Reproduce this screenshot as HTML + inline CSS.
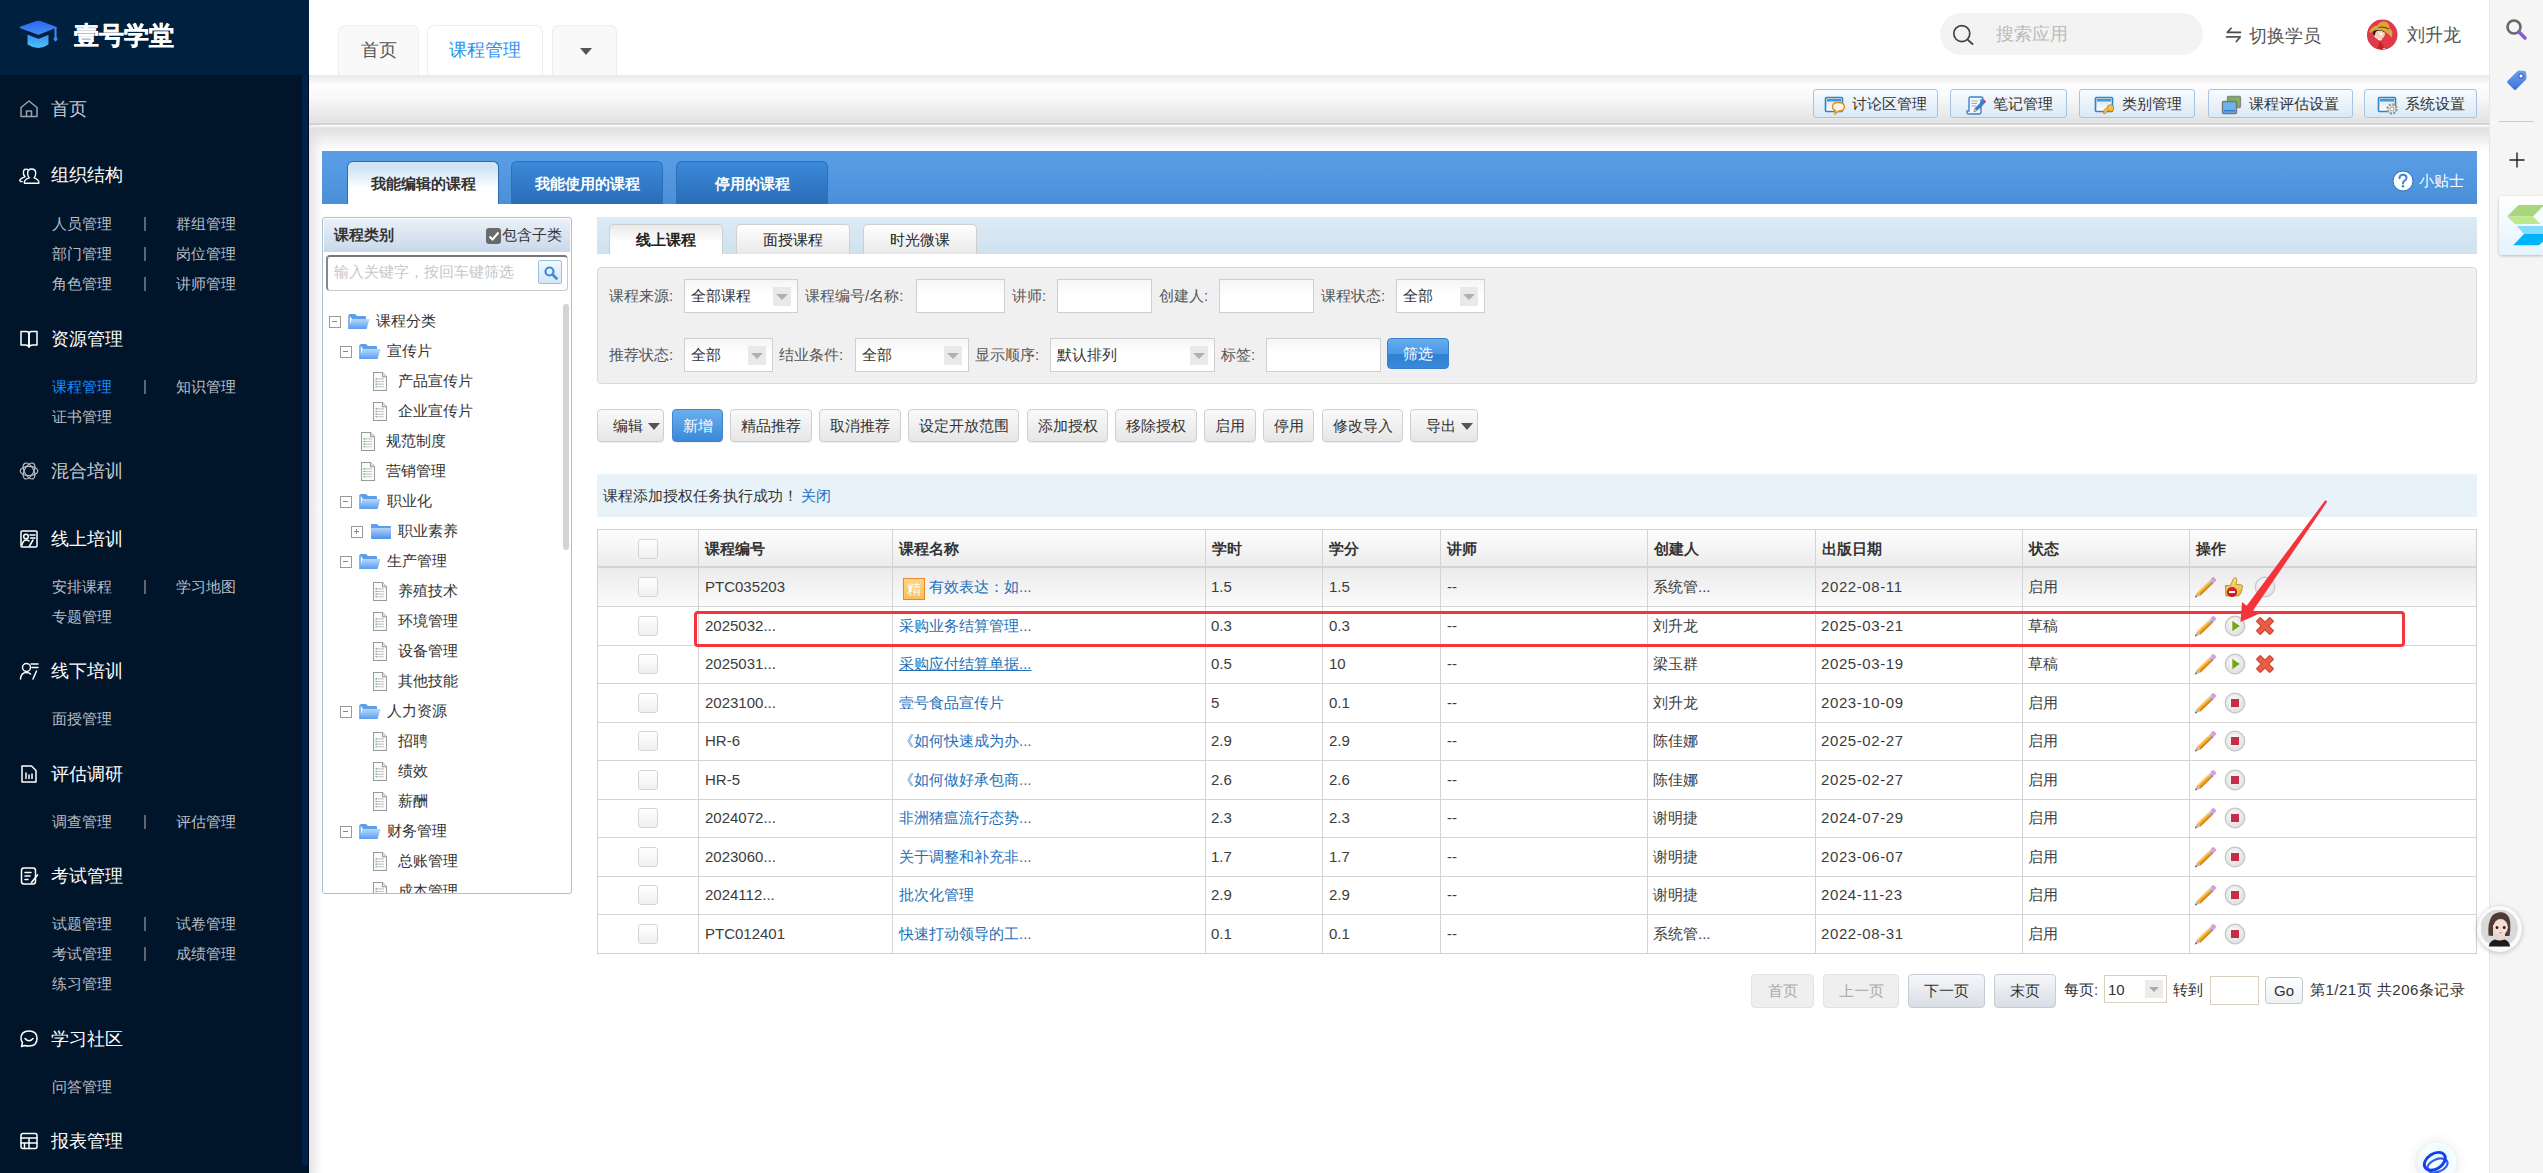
<!DOCTYPE html><html><head><meta charset="utf-8"><style>
*{margin:0;padding:0;box-sizing:border-box}
html,body{width:2543px;height:1173px;overflow:hidden;background:#fff;font-family:"Liberation Sans",sans-serif;color:#333}
.abs{position:absolute}
#side{position:absolute;left:0;top:0;width:309px;height:1173px;background:#001529}
#side .logo{position:absolute;left:0;top:0;width:309px;height:75px;background:#00203f}
#side .menu{position:absolute;left:302px;top:75px;width:7px;height:1090px;background:#00224a;border-right:1px solid #000d1f}
.mt{position:absolute;left:51px;font-size:18px;color:#fff;line-height:24px;white-space:nowrap}
.mt.g{color:#c8ccd2}
.ms{position:absolute;font-size:15px;color:#b9bdc4;line-height:20px;white-space:nowrap}
.ms.on{color:#1a8cff}
.sep{position:absolute;left:144px;width:2px;height:14px;background:#5f6670}
.mi{position:absolute;left:19px;width:20px;height:20px}

.tabh{top:25px;height:50px;border:1px solid #eee;border-bottom:none;border-radius:7px 7px 0 0;font-size:18px;line-height:48px;text-align:center}
.tbb{top:89px;height:29px;border:1px solid #a7c5e2;border-radius:3px;background:linear-gradient(#f7fbfe,#dce9f5);font-size:15px;line-height:27px;color:#333;padding-left:41px;white-space:nowrap}
.tbb .ic{position:absolute;left:11px;top:5px;width:20px;height:17px;border:2px solid #3a7cc0;background:#fff}
.btab{top:161px;height:43px;border-radius:6px 6px 0 0;font-size:15px;font-weight:bold;line-height:43px;text-align:center;color:#fff;background:linear-gradient(#3b8ad9,#2a6db8);border:1px solid #2f6fb3;border-bottom:none}
.btab.on{background:linear-gradient(#d0e4f5 15%,#fff 62%);color:#333;border-color:#2a6cb3}
.itab{top:224px;width:114px;height:30px;border:1px solid #cfcfcf;border-bottom:none;border-radius:5px 5px 0 0;background:linear-gradient(#fff,#e9e9e9);font-size:15px;line-height:30px;text-align:center;color:#222}
.itab.on{background:linear-gradient(#eaeaea,#fff 60%);font-weight:bold}
.abtn{top:409px;height:33px;box-shadow:0 1px 0 rgba(0,0,0,0.07);border:1px solid #cfcfcf;border-radius:4px;background:linear-gradient(#fafafa,#e6e6e6);font-size:15px;line-height:31px;text-align:center;color:#333;white-space:nowrap}
.abtn.blue{background:linear-gradient(#6aaeee,#3a88da);border-color:#3f86d0;color:#fff}

.th{font-size:15px;font-weight:bold;line-height:20px;color:#333;white-space:nowrap}
.td{font-size:15px;line-height:20px;color:#3c3c3c;white-space:nowrap}
.td.lk{color:#1d6fb8}
.td.u{text-decoration:underline}
.cb{width:20px;height:20px;border:1px solid #d5d5d5;border-radius:3px;background:linear-gradient(#fff,#f0f0f0)}

.fl{font-size:15px;line-height:20px;color:#555;white-space:nowrap}
.fin{height:34px;border:1px solid #cfcfcf;background:linear-gradient(#f5f5f5,#fff 45%);}
.fin .st{position:absolute;left:6px;top:6px;font-size:15px;line-height:20px;color:#333;white-space:nowrap}
.fin .sa{position:absolute;right:6px;top:7px;width:18px;height:19px;background:#e9e9e9}
.fin .sa i{position:absolute;left:3px;top:7px;border-left:6px solid transparent;border-right:6px solid transparent;border-top:6px solid #b0b0b0}
.pg{top:974px;height:34px;border:1px solid #c5ccd5;border-radius:4px;background:linear-gradient(#f5f7fa,#d9dee5);font-size:15px;line-height:32px;text-align:center;color:#333}
.pg.dis{background:#efefef;border-color:#e2e2e2;color:#aaa}
.pt{font-size:15px;line-height:20px;color:#333;white-space:nowrap}

.tt{font-size:15px;line-height:20px;color:#333;white-space:nowrap}
</style></head><body>
<div id="side"><div class="logo"></div><div class="menu"></div>
<div class="abs" style="left:74px;top:18px;font-size:25px;font-weight:bold;color:#fff;line-height:34px;-webkit-text-stroke:0.3px #fff">壹号学堂</div>
<div class="mt g" style="top:97px">首页</div>
<div class="mt" style="top:163px">组织结构</div>
<div class="ms" style="left:52px;top:214px">人员管理</div>
<div class="sep" style="top:217px"></div>
<div class="ms" style="left:176px;top:214px">群组管理</div>
<div class="ms" style="left:52px;top:244px">部门管理</div>
<div class="sep" style="top:247px"></div>
<div class="ms" style="left:176px;top:244px">岗位管理</div>
<div class="ms" style="left:52px;top:274px">角色管理</div>
<div class="sep" style="top:277px"></div>
<div class="ms" style="left:176px;top:274px">讲师管理</div>
<div class="mt" style="top:327px">资源管理</div>
<div class="ms on" style="left:52px;top:377px">课程管理</div>
<div class="sep" style="top:380px"></div>
<div class="ms" style="left:176px;top:377px">知识管理</div>
<div class="ms" style="left:52px;top:407px">证书管理</div>
<div class="mt g" style="top:459px">混合培训</div>
<div class="mt" style="top:527px">线上培训</div>
<div class="ms" style="left:52px;top:577px">安排课程</div>
<div class="sep" style="top:580px"></div>
<div class="ms" style="left:176px;top:577px">学习地图</div>
<div class="ms" style="left:52px;top:607px">专题管理</div>
<div class="mt" style="top:659px">线下培训</div>
<div class="ms" style="left:52px;top:709px">面授管理</div>
<div class="mt" style="top:762px">评估调研</div>
<div class="ms" style="left:52px;top:812px">调查管理</div>
<div class="sep" style="top:815px"></div>
<div class="ms" style="left:176px;top:812px">评估管理</div>
<div class="mt" style="top:864px">考试管理</div>
<div class="ms" style="left:52px;top:914px">试题管理</div>
<div class="sep" style="top:917px"></div>
<div class="ms" style="left:176px;top:914px">试卷管理</div>
<div class="ms" style="left:52px;top:944px">考试管理</div>
<div class="sep" style="top:947px"></div>
<div class="ms" style="left:176px;top:944px">成绩管理</div>
<div class="ms" style="left:52px;top:974px">练习管理</div>
<div class="mt" style="top:1027px">学习社区</div>
<div class="ms" style="left:52px;top:1077px">问答管理</div>
<div class="mt" style="top:1129px">报表管理</div>
<svg class="abs" style="left:18px;top:98px" width="22" height="22" viewBox="0 0 22 22" fill="none" stroke="#9ba1a9" stroke-width="1.5" stroke-linejoin="round" stroke-linecap="round"><path d="M3 9.5 L11 3 L19 9.5 V18.5 H3Z"/><path d="M8.5 18.5 V13 H13.5 V18.5"/></svg>
<svg class="abs" style="left:18px;top:164px" width="22" height="22" viewBox="0 0 22 22" fill="none" stroke="#fff" stroke-width="1.5" stroke-linejoin="round" stroke-linecap="round"><path d="M11.2 13.8 Q9.6 12 9.6 9.2 Q9.6 5 13.65 5 Q17.7 5 17.7 9.2 Q17.7 12 16.1 13.8 Q20.8 15.5 20.8 18 V19.3 H6.4 V18 Q6.4 15.5 11.2 13.8Z" stroke-width="1.4"/><path d="M9.4 5.3 Q6.2 4.3 5.4 7.8 Q5 10.8 7 12.8 Q2.4 14.2 1.8 16.2 Q1.8 17.6 4.2 17.6" stroke-width="1.4"/></svg>
<svg class="abs" style="left:18px;top:328px" width="22" height="22" viewBox="0 0 22 22" fill="none" stroke="#fff" stroke-width="1.5" stroke-linejoin="round" stroke-linecap="round"><path d="M3 3.5 H8.5 Q11 3.5 11 6 V19 Q10 17 7.5 17 H3Z"/><path d="M19 3.5 H13.5 Q11 3.5 11 6 V19 Q12 17 14.5 17 H19Z"/></svg>
<svg class="abs" style="left:18px;top:460px" width="22" height="22" viewBox="0 0 22 22" fill="none" stroke="#b8bcc3" stroke-width="1.5" stroke-linejoin="round" stroke-linecap="round"><g stroke-width="1.2"><ellipse cx="11" cy="11" rx="8.8" ry="4.6"/><ellipse cx="11" cy="11" rx="8.8" ry="4.6" transform="rotate(60 11 11)"/><ellipse cx="11" cy="11" rx="8.8" ry="4.6" transform="rotate(120 11 11)"/></g></svg>
<svg class="abs" style="left:18px;top:528px" width="22" height="22" viewBox="0 0 22 22" fill="none" stroke="#fff" stroke-width="1.5" stroke-linejoin="round" stroke-linecap="round"><rect x="3" y="3" width="16" height="16" rx="1"/><circle cx="8" cy="8.5" r="2.3"/><path d="M4 17 Q5 12 8.5 12 Q10 12 11 13"/><path d="M12 7 H17 M12.5 10 H17 M15 12 L11.5 18"/></svg>
<svg class="abs" style="left:18px;top:660px" width="22" height="22" viewBox="0 0 22 22" fill="none" stroke="#fff" stroke-width="1.5" stroke-linejoin="round" stroke-linecap="round"><circle cx="8.5" cy="7.5" r="4"/><path d="M2.5 19 Q3 12.5 8.5 12.5 Q11 12.5 12.5 14"/><path d="M13 4 H20 M14 7.5 H20 M18.5 11 L15 19"/></svg>
<svg class="abs" style="left:18px;top:763px" width="22" height="22" viewBox="0 0 22 22" fill="none" stroke="#fff" stroke-width="1.5" stroke-linejoin="round" stroke-linecap="round"><path d="M4 3 H13.5 L18 7.5 V19 H4Z"/><path d="M8 15.5 V10 M11 15.5 V12 M14 15.5 V11"/></svg>
<svg class="abs" style="left:18px;top:865px" width="22" height="22" viewBox="0 0 22 22" fill="none" stroke="#fff" stroke-width="1.5" stroke-linejoin="round" stroke-linecap="round"><rect x="3.5" y="3" width="14" height="16" rx="2.5"/><path d="M7 7.5 H13 M7 11 H12 M7 14.5 H10"/><path d="M19.5 10 L13.5 17.5" stroke-width="1.7"/></svg>
<svg class="abs" style="left:18px;top:1028px" width="22" height="22" viewBox="0 0 22 22" fill="none" stroke="#fff" stroke-width="1.5" stroke-linejoin="round" stroke-linecap="round"><path d="M3.5 18.5 L4.5 14.5 Q3 12.5 3 10.5 Q3 3 11 3 Q19 3 19 10.5 Q19 18 11 18 Q8.5 18 6.5 17.5Z"/><path d="M7 10.5 Q11 15 15 10.5"/></svg>
<svg class="abs" style="left:18px;top:1130px" width="22" height="22" viewBox="0 0 22 22" fill="none" stroke="#fff" stroke-width="1.5" stroke-linejoin="round" stroke-linecap="round"><rect x="3" y="3.5" width="16" height="15" rx="2"/><path d="M3 8 H19 M3 13 H19 M11 8 V18.5 M6.5 13 V18.5"/></svg>
<svg class="abs" style="left:19px;top:20px" width="40" height="30" viewBox="0 0 40 30"><defs><linearGradient id="cap1" x1="0" y1="0" x2="0" y2="1"><stop offset="0" stop-color="#2f66f6"/><stop offset="1" stop-color="#3f8cf5"/></linearGradient><linearGradient id="cap2" x1="0" y1="0" x2="0" y2="1"><stop offset="0" stop-color="#3a8cf0"/><stop offset="1" stop-color="#4fc3fb"/></linearGradient></defs><path d="M1.2 8.2 Q0 7.2 1.5 6.5 L17.5 1 Q19.5 0.3 21.5 1 L38.5 7.2 L20.5 14.5 Q19.5 15 18.5 14.5 Z" fill="url(#cap1)"/><path d="M8.5 14.5 L18.5 18.5 Q19.5 19 20.5 18.5 L29.5 14.7 V24.5 Q19.5 31.5 8.5 24.5Z" fill="url(#cap2)"/><path d="M35.5 8 L37.6 7.6 V17 L38.8 19.3 L36.6 21.8 L34.4 19.3 L35.5 17Z" fill="#3d86f1"/></svg>
</div>
<div class="abs" style="left:309px;top:0;width:2180px;height:75px;background:#fff"></div>
<div class="abs tabh" style="left:338px;width:81px;background:#f9f9f9;color:#555">首页</div>
<div class="abs tabh" style="left:427px;width:116px;background:#fff;color:#2b8ff0">课程管理</div>
<div class="abs tabh" style="left:552px;width:65px;background:#f9f9f9"><div class="abs" style="left:27px;top:22px;width:0;height:0;border-left:6px solid transparent;border-right:6px solid transparent;border-top:7px solid #555"></div></div>
<div class="abs" style="left:1940px;top:13px;width:263px;height:42px;border-radius:21px;background:#f3f3f3"></div>
<div class="abs" style="left:1996px;top:22px;font-size:18px;line-height:24px;color:#bbb">搜索应用</div>
<svg class="abs" style="left:2224px;top:26px" width="20" height="18" viewBox="0 0 20 18"><path d="M16.6 6.4 H3.3 L7.1 2.2" stroke="#4a4a4a" stroke-width="1.6" fill="none" stroke-linecap="round" stroke-linejoin="round"/><path d="M2.6 10.9 H16.2 L12.4 15.5" stroke="#555" stroke-width="1.8" fill="none" stroke-linecap="round" stroke-linejoin="round"/></svg>
<div class="abs" style="left:2249px;top:23.5px;font-size:18px;line-height:24px;color:#555">切换学员</div>
<div class="abs" style="left:2367px;top:20px;width:30px;height:30px;border-radius:50%;background:#d63a3a"></div>
<div class="abs" style="left:2407px;top:23px;font-size:18px;line-height:24px;color:#555">刘升龙</div>
<div class="abs" style="left:309px;top:75px;width:2180px;height:50px;background:linear-gradient(#e9e9e9 0,#fdfdfd 22%,#f9f9f9 45%,#e2e2e2 100%);border-bottom:2px solid #d2d2d2"></div>
<div class="abs tbb" style="left:1813px;width:125px;padding-left:38px">讨论区管理</div>
<div class="abs tbb" style="left:1950px;width:117px;padding-left:42px">笔记管理</div>
<div class="abs tbb" style="left:2079px;width:116px;padding-left:42px">类别管理</div>
<div class="abs tbb" style="left:2208px;width:145px;padding-left:40px">课程评估设置</div>
<div class="abs tbb" style="left:2364px;width:113px;padding-left:40px">系统设置</div>
<div class="abs" style="left:309px;top:125px;width:2180px;height:1048px;background:#fff"></div>
<div class="abs" style="left:309px;top:125px;width:14px;height:1048px;background:linear-gradient(90deg,#e6e6e6,rgba(255,255,255,0))"></div>
<div class="abs" style="left:309px;top:126px;width:2180px;height:25px;background:linear-gradient(#f4f4f4 0,#e0e0e0 8%,rgba(255,255,255,0) 100%)"></div>
<div class="abs" style="left:2489px;top:0;width:54px;height:1173px;background:#f5f5f5;border-left:1px solid #e6e6e6"></div>
<div class="abs" style="left:2476px;top:0;width:13px;height:13px;background:#fff;border-top-right-radius:7px"></div>
<div class="abs" style="left:322px;top:151px;width:2155px;height:53px;background:linear-gradient(#5a9fe6,#4a8fd9)"></div>
<div class="abs btab on" style="left:347px;width:152px">我能编辑的课程</div>
<div class="abs btab" style="left:511px;width:152px">我能使用的课程</div>
<div class="abs btab" style="left:676px;width:152px">停用的课程</div>
<div class="abs" style="left:2419px;top:171px;font-size:15px;line-height:20px;color:#fff">小贴士</div>
<div class="abs" style="left:322px;top:217px;width:250px;height:677px;border:1px solid #a9bfd6;border-radius:3px;background:#fff"></div>
<div class="abs" style="left:324px;top:219px;width:246px;height:33px;background:linear-gradient(#eaf0f8,#c8d8ea)"></div>
<div class="abs" style="left:334px;top:225px;font-size:15px;line-height:20px;color:#333;font-weight:bold">课程类别</div>
<div class="abs" style="left:502px;top:225px;font-size:15px;line-height:20px;color:#333">包含子类</div>
<div class="abs" style="left:597px;top:217px;width:1880px;height:37px;background:linear-gradient(#ddebf5,#cfe1ee)"></div>
<div class="abs itab on" style="left:609px">线上课程</div>
<div class="abs itab" style="left:736px">面授课程</div>
<div class="abs itab" style="left:863px">时光微课</div>
<div class="abs" style="left:597px;top:267px;width:1880px;height:117px;background:#f0f0f0;border:1px solid #d9d9d9;border-radius:4px"></div>
<div class="abs abtn" style="left:597px;width:67px;text-align:left;padding-left:15px">编辑<i class="abs" style="left:50px;top:13px;border-left:6px solid transparent;border-right:6px solid transparent;border-top:7px solid #555"></i></div>
<div class="abs abtn blue" style="left:672px;width:51px">新增</div>
<div class="abs abtn" style="left:730px;width:82px">精品推荐</div>
<div class="abs abtn" style="left:819px;width:82px">取消推荐</div>
<div class="abs abtn" style="left:908px;width:111px">设定开放范围</div>
<div class="abs abtn" style="left:1027px;width:81px">添加授权</div>
<div class="abs abtn" style="left:1115px;width:82px">移除授权</div>
<div class="abs abtn" style="left:1204px;width:52px">启用</div>
<div class="abs abtn" style="left:1263px;width:51px">停用</div>
<div class="abs abtn" style="left:1322px;width:81px">修改导入</div>
<div class="abs abtn" style="left:1410px;width:68px;text-align:left;padding-left:15px">导出<i class="abs" style="left:50px;top:13px;border-left:6px solid transparent;border-right:6px solid transparent;border-top:7px solid #555"></i></div>
<div class="abs" style="left:597px;top:474px;width:1880px;height:43px;background:#e8f2f9"></div>
<div class="abs" style="left:603px;top:486px;font-size:15px;line-height:20px;color:#333">课程添加授权任务执行成功！<span style="color:#1b6cc0;margin-left:3px">关闭</span></div>
<div class="abs" style="left:597px;top:529px;width:1880px;height:425px;border:1px solid #d0d0d0;background:#fff"></div>
<div class="abs" style="left:598px;top:530px;width:1878px;height:38px;background:linear-gradient(#fdfdfd,#ececec);border-bottom:2px solid #d4d4d4"></div>
<div class="abs" style="left:598px;top:568px;width:1878px;height:38px;background:linear-gradient(#ebebeb,#fbfbfb)"></div>
<div class="abs" style="left:698px;top:530px;width:1px;height:423px;background:#d4d4d4"></div>
<div class="abs" style="left:892px;top:530px;width:1px;height:423px;background:#d4d4d4"></div>
<div class="abs" style="left:1205px;top:530px;width:1px;height:423px;background:#d4d4d4"></div>
<div class="abs" style="left:1322px;top:530px;width:1px;height:423px;background:#d4d4d4"></div>
<div class="abs" style="left:1440px;top:530px;width:1px;height:423px;background:#d4d4d4"></div>
<div class="abs" style="left:1647px;top:530px;width:1px;height:423px;background:#d4d4d4"></div>
<div class="abs" style="left:1815px;top:530px;width:1px;height:423px;background:#d4d4d4"></div>
<div class="abs" style="left:2022px;top:530px;width:1px;height:423px;background:#d4d4d4"></div>
<div class="abs" style="left:2189px;top:530px;width:1px;height:423px;background:#d4d4d4"></div>
<div class="abs" style="left:598px;top:606px;width:1878px;height:1px;background:#d4d4d4"></div>
<div class="abs" style="left:598px;top:645px;width:1878px;height:1px;background:#d4d4d4"></div>
<div class="abs" style="left:598px;top:683px;width:1878px;height:1px;background:#d4d4d4"></div>
<div class="abs" style="left:598px;top:722px;width:1878px;height:1px;background:#d4d4d4"></div>
<div class="abs" style="left:598px;top:760px;width:1878px;height:1px;background:#d4d4d4"></div>
<div class="abs" style="left:598px;top:799px;width:1878px;height:1px;background:#d4d4d4"></div>
<div class="abs" style="left:598px;top:837px;width:1878px;height:1px;background:#d4d4d4"></div>
<div class="abs" style="left:598px;top:876px;width:1878px;height:1px;background:#d4d4d4"></div>
<div class="abs" style="left:598px;top:914px;width:1878px;height:1px;background:#d4d4d4"></div>
<div class="abs th" style="left:704.5px;top:538.5px">课程编号</div>
<div class="abs th" style="left:898.5px;top:538.5px">课程名称</div>
<div class="abs th" style="left:1211.5px;top:538.5px">学时</div>
<div class="abs th" style="left:1328.5px;top:538.5px">学分</div>
<div class="abs th" style="left:1446.5px;top:538.5px">讲师</div>
<div class="abs th" style="left:1653.5px;top:538.5px">创建人</div>
<div class="abs th" style="left:1821.5px;top:538.5px">出版日期</div>
<div class="abs th" style="left:2028.5px;top:538.5px">状态</div>
<div class="abs th" style="left:2195.5px;top:538.5px">操作</div>
<div class="abs cb" style="left:638px;top:538.5px"></div>
<div class="abs cb" style="left:638px;top:577.25px"></div>
<div class="abs td" style="left:705px;top:577.25px">PTC035203</div>
<div class="abs" style="left:903px;top:578.25px;width:22px;height:22px;background:linear-gradient(#fed586,#fbbf5c);border:1px solid #e6892c;color:#fff;font-size:14px;line-height:20px;text-align:center">精</div>
<div class="abs td lk" style="left:929px;top:577.25px">有效表达：如...</div>
<div class="abs td" style="left:1211px;top:577.25px">1.5</div>
<div class="abs td" style="left:1329px;top:577.25px">1.5</div>
<div class="abs td" style="left:1447px;top:577.25px">--</div>
<div class="abs td" style="left:1653px;top:577.25px">系统管...</div>
<div class="abs td" style="left:1821px;top:577.25px;letter-spacing:0.6px">2022-08-11</div>
<div class="abs td" style="left:2028px;top:577.25px">启用</div>
<svg class="abs" style="left:2193px;top:575.25px" width="24" height="24" viewBox="0 0 24 24"><defs><linearGradient id="pg" x1="0" y1="0" x2="0" y2="1"><stop offset="0" stop-color="#ffe39a"/><stop offset="0.5" stop-color="#f7a722"/><stop offset="1" stop-color="#c9700f"/></linearGradient><linearGradient id="pf" x1="0" y1="0" x2="0" y2="1"><stop offset="0" stop-color="#e0e0e0"/><stop offset="1" stop-color="#7d7d7d"/></linearGradient></defs><g transform="translate(1.9 22.4) rotate(-43.6)"><path d="M0 0 L5.5 -2.5 V2.5Z" fill="#c9b79a"/><path d="M0 0 L2 -0.9 V0.9Z" fill="#5a4a3a"/><rect x="5.5" y="-2.5" width="15" height="5" fill="url(#pg)"/><rect x="20.5" y="-2.5" width="3" height="5" fill="url(#pf)"/><rect x="23.5" y="-2.5" width="4.3" height="5" rx="1.5" fill="#e09ad8"/></g></svg>
<svg class="abs" style="left:2222px;top:575.25px" width="24" height="24" viewBox="0 0 24 24"><defs><linearGradient id="tg" x1="0" y1="0" x2="0" y2="1"><stop offset="0" stop-color="#fbe08a"/><stop offset="1" stop-color="#e2b23a"/></linearGradient></defs><path d="M3.5 10.5 L8.5 10.5 L11.5 3.5 Q12.8 2 14 3 Q15 4 14.5 6.5 L14 9.5 L19 9.8 Q21 10.3 20.5 12.3 L19.8 13.5 Q20.6 14.8 19.5 16 L18 19.5 Q17 21 15 21 L4 21Z" fill="url(#tg)" stroke="#b58a1a" stroke-width="0.9"/><circle cx="10" cy="17" r="5" fill="#c8101c"/><circle cx="10" cy="16.2" r="3.8" fill="#e0303a" opacity="0.6"/><rect x="7" y="16" width="6" height="2" rx="0.5" fill="#fff"/></svg>
<svg class="abs" style="left:2253px;top:575.25px" width="24" height="24" viewBox="0 0 24 24"><defs><radialGradient id="gc" cx="0.45" cy="0.4" r="0.7"><stop offset="0" stop-color="#fafafa"/><stop offset="1" stop-color="#dedede"/></radialGradient></defs><circle cx="12" cy="12" r="9.8" fill="url(#gc)" stroke="#c8c8c8" stroke-width="1.2"/></svg>
<div class="abs cb" style="left:638px;top:615.75px"></div>
<div class="abs td" style="left:705px;top:615.75px">2025032...</div>
<div class="abs td lk" style="left:899px;top:615.75px">采购业务结算管理...</div>
<div class="abs td" style="left:1211px;top:615.75px">0.3</div>
<div class="abs td" style="left:1329px;top:615.75px">0.3</div>
<div class="abs td" style="left:1447px;top:615.75px">--</div>
<div class="abs td" style="left:1653px;top:615.75px">刘升龙</div>
<div class="abs td" style="left:1821px;top:615.75px;letter-spacing:0.6px">2025-03-21</div>
<div class="abs td" style="left:2028px;top:615.75px">草稿</div>
<svg class="abs" style="left:2193px;top:613.75px" width="24" height="24" viewBox="0 0 24 24"><defs><linearGradient id="pg" x1="0" y1="0" x2="0" y2="1"><stop offset="0" stop-color="#ffe39a"/><stop offset="0.5" stop-color="#f7a722"/><stop offset="1" stop-color="#c9700f"/></linearGradient><linearGradient id="pf" x1="0" y1="0" x2="0" y2="1"><stop offset="0" stop-color="#e0e0e0"/><stop offset="1" stop-color="#7d7d7d"/></linearGradient></defs><g transform="translate(1.9 22.4) rotate(-43.6)"><path d="M0 0 L5.5 -2.5 V2.5Z" fill="#c9b79a"/><path d="M0 0 L2 -0.9 V0.9Z" fill="#5a4a3a"/><rect x="5.5" y="-2.5" width="15" height="5" fill="url(#pg)"/><rect x="20.5" y="-2.5" width="3" height="5" fill="url(#pf)"/><rect x="23.5" y="-2.5" width="4.3" height="5" rx="1.5" fill="#e09ad8"/></g></svg>
<svg class="abs" style="left:2223px;top:613.75px" width="24" height="24" viewBox="0 0 24 24"><defs><radialGradient id="pc" cx="0.45" cy="0.4" r="0.7"><stop offset="0" stop-color="#fcfcfc"/><stop offset="1" stop-color="#d9d9d9"/></radialGradient></defs><circle cx="12" cy="12" r="9.8" fill="url(#pc)" stroke="#c4c4c4" stroke-width="1.2"/><path d="M9.3 6.8 L16.8 12 L9.3 17.2Z" fill="#76a615"/></svg>
<svg class="abs" style="left:2253px;top:613.75px" width="24" height="24" viewBox="0 0 24 24"><g transform="rotate(45 12 12)"><rect x="2" y="8.7" width="20" height="6.6" rx="1.2" fill="#c8402e"/><rect x="8.7" y="2" width="6.6" height="20" rx="1.2" fill="#c8402e"/><rect x="3" y="9.7" width="18" height="4.6" rx="0.8" fill="#e95c46"/><rect x="9.7" y="3" width="4.6" height="18" rx="0.8" fill="#e95c46"/></g></svg>
<div class="abs cb" style="left:638px;top:654.25px"></div>
<div class="abs td" style="left:705px;top:654.25px">2025031...</div>
<div class="abs td lk u" style="left:899px;top:654.25px">采购应付结算单据...</div>
<div class="abs td" style="left:1211px;top:654.25px">0.5</div>
<div class="abs td" style="left:1329px;top:654.25px">10</div>
<div class="abs td" style="left:1447px;top:654.25px">--</div>
<div class="abs td" style="left:1653px;top:654.25px">梁玉群</div>
<div class="abs td" style="left:1821px;top:654.25px;letter-spacing:0.6px">2025-03-19</div>
<div class="abs td" style="left:2028px;top:654.25px">草稿</div>
<svg class="abs" style="left:2193px;top:652.25px" width="24" height="24" viewBox="0 0 24 24"><defs><linearGradient id="pg" x1="0" y1="0" x2="0" y2="1"><stop offset="0" stop-color="#ffe39a"/><stop offset="0.5" stop-color="#f7a722"/><stop offset="1" stop-color="#c9700f"/></linearGradient><linearGradient id="pf" x1="0" y1="0" x2="0" y2="1"><stop offset="0" stop-color="#e0e0e0"/><stop offset="1" stop-color="#7d7d7d"/></linearGradient></defs><g transform="translate(1.9 22.4) rotate(-43.6)"><path d="M0 0 L5.5 -2.5 V2.5Z" fill="#c9b79a"/><path d="M0 0 L2 -0.9 V0.9Z" fill="#5a4a3a"/><rect x="5.5" y="-2.5" width="15" height="5" fill="url(#pg)"/><rect x="20.5" y="-2.5" width="3" height="5" fill="url(#pf)"/><rect x="23.5" y="-2.5" width="4.3" height="5" rx="1.5" fill="#e09ad8"/></g></svg>
<svg class="abs" style="left:2223px;top:652.25px" width="24" height="24" viewBox="0 0 24 24"><defs><radialGradient id="pc" cx="0.45" cy="0.4" r="0.7"><stop offset="0" stop-color="#fcfcfc"/><stop offset="1" stop-color="#d9d9d9"/></radialGradient></defs><circle cx="12" cy="12" r="9.8" fill="url(#pc)" stroke="#c4c4c4" stroke-width="1.2"/><path d="M9.3 6.8 L16.8 12 L9.3 17.2Z" fill="#76a615"/></svg>
<svg class="abs" style="left:2253px;top:652.25px" width="24" height="24" viewBox="0 0 24 24"><g transform="rotate(45 12 12)"><rect x="2" y="8.7" width="20" height="6.6" rx="1.2" fill="#c8402e"/><rect x="8.7" y="2" width="6.6" height="20" rx="1.2" fill="#c8402e"/><rect x="3" y="9.7" width="18" height="4.6" rx="0.8" fill="#e95c46"/><rect x="9.7" y="3" width="4.6" height="18" rx="0.8" fill="#e95c46"/></g></svg>
<div class="abs cb" style="left:638px;top:692.75px"></div>
<div class="abs td" style="left:705px;top:692.75px">2023100...</div>
<div class="abs td lk" style="left:899px;top:692.75px">壹号食品宣传片</div>
<div class="abs td" style="left:1211px;top:692.75px">5</div>
<div class="abs td" style="left:1329px;top:692.75px">0.1</div>
<div class="abs td" style="left:1447px;top:692.75px">--</div>
<div class="abs td" style="left:1653px;top:692.75px">刘升龙</div>
<div class="abs td" style="left:1821px;top:692.75px;letter-spacing:0.6px">2023-10-09</div>
<div class="abs td" style="left:2028px;top:692.75px">启用</div>
<svg class="abs" style="left:2193px;top:690.75px" width="24" height="24" viewBox="0 0 24 24"><defs><linearGradient id="pg" x1="0" y1="0" x2="0" y2="1"><stop offset="0" stop-color="#ffe39a"/><stop offset="0.5" stop-color="#f7a722"/><stop offset="1" stop-color="#c9700f"/></linearGradient><linearGradient id="pf" x1="0" y1="0" x2="0" y2="1"><stop offset="0" stop-color="#e0e0e0"/><stop offset="1" stop-color="#7d7d7d"/></linearGradient></defs><g transform="translate(1.9 22.4) rotate(-43.6)"><path d="M0 0 L5.5 -2.5 V2.5Z" fill="#c9b79a"/><path d="M0 0 L2 -0.9 V0.9Z" fill="#5a4a3a"/><rect x="5.5" y="-2.5" width="15" height="5" fill="url(#pg)"/><rect x="20.5" y="-2.5" width="3" height="5" fill="url(#pf)"/><rect x="23.5" y="-2.5" width="4.3" height="5" rx="1.5" fill="#e09ad8"/></g></svg>
<svg class="abs" style="left:2223px;top:690.75px" width="24" height="24" viewBox="0 0 24 24"><defs><radialGradient id="sc" cx="0.45" cy="0.4" r="0.7"><stop offset="0" stop-color="#fcfcfc"/><stop offset="1" stop-color="#dadada"/></radialGradient></defs><circle cx="12" cy="12" r="9.8" fill="url(#sc)" stroke="#c4c4c4" stroke-width="1.2"/><rect x="8" y="8" width="8" height="8" fill="#c22d48"/></svg>
<div class="abs cb" style="left:638px;top:731.25px"></div>
<div class="abs td" style="left:705px;top:731.25px">HR-6</div>
<div class="abs td lk" style="left:899px;top:731.25px">《如何快速成为办...</div>
<div class="abs td" style="left:1211px;top:731.25px">2.9</div>
<div class="abs td" style="left:1329px;top:731.25px">2.9</div>
<div class="abs td" style="left:1447px;top:731.25px">--</div>
<div class="abs td" style="left:1653px;top:731.25px">陈佳娜</div>
<div class="abs td" style="left:1821px;top:731.25px;letter-spacing:0.6px">2025-02-27</div>
<div class="abs td" style="left:2028px;top:731.25px">启用</div>
<svg class="abs" style="left:2193px;top:729.25px" width="24" height="24" viewBox="0 0 24 24"><defs><linearGradient id="pg" x1="0" y1="0" x2="0" y2="1"><stop offset="0" stop-color="#ffe39a"/><stop offset="0.5" stop-color="#f7a722"/><stop offset="1" stop-color="#c9700f"/></linearGradient><linearGradient id="pf" x1="0" y1="0" x2="0" y2="1"><stop offset="0" stop-color="#e0e0e0"/><stop offset="1" stop-color="#7d7d7d"/></linearGradient></defs><g transform="translate(1.9 22.4) rotate(-43.6)"><path d="M0 0 L5.5 -2.5 V2.5Z" fill="#c9b79a"/><path d="M0 0 L2 -0.9 V0.9Z" fill="#5a4a3a"/><rect x="5.5" y="-2.5" width="15" height="5" fill="url(#pg)"/><rect x="20.5" y="-2.5" width="3" height="5" fill="url(#pf)"/><rect x="23.5" y="-2.5" width="4.3" height="5" rx="1.5" fill="#e09ad8"/></g></svg>
<svg class="abs" style="left:2223px;top:729.25px" width="24" height="24" viewBox="0 0 24 24"><defs><radialGradient id="sc" cx="0.45" cy="0.4" r="0.7"><stop offset="0" stop-color="#fcfcfc"/><stop offset="1" stop-color="#dadada"/></radialGradient></defs><circle cx="12" cy="12" r="9.8" fill="url(#sc)" stroke="#c4c4c4" stroke-width="1.2"/><rect x="8" y="8" width="8" height="8" fill="#c22d48"/></svg>
<div class="abs cb" style="left:638px;top:769.75px"></div>
<div class="abs td" style="left:705px;top:769.75px">HR-5</div>
<div class="abs td lk" style="left:899px;top:769.75px">《如何做好承包商...</div>
<div class="abs td" style="left:1211px;top:769.75px">2.6</div>
<div class="abs td" style="left:1329px;top:769.75px">2.6</div>
<div class="abs td" style="left:1447px;top:769.75px">--</div>
<div class="abs td" style="left:1653px;top:769.75px">陈佳娜</div>
<div class="abs td" style="left:1821px;top:769.75px;letter-spacing:0.6px">2025-02-27</div>
<div class="abs td" style="left:2028px;top:769.75px">启用</div>
<svg class="abs" style="left:2193px;top:767.75px" width="24" height="24" viewBox="0 0 24 24"><defs><linearGradient id="pg" x1="0" y1="0" x2="0" y2="1"><stop offset="0" stop-color="#ffe39a"/><stop offset="0.5" stop-color="#f7a722"/><stop offset="1" stop-color="#c9700f"/></linearGradient><linearGradient id="pf" x1="0" y1="0" x2="0" y2="1"><stop offset="0" stop-color="#e0e0e0"/><stop offset="1" stop-color="#7d7d7d"/></linearGradient></defs><g transform="translate(1.9 22.4) rotate(-43.6)"><path d="M0 0 L5.5 -2.5 V2.5Z" fill="#c9b79a"/><path d="M0 0 L2 -0.9 V0.9Z" fill="#5a4a3a"/><rect x="5.5" y="-2.5" width="15" height="5" fill="url(#pg)"/><rect x="20.5" y="-2.5" width="3" height="5" fill="url(#pf)"/><rect x="23.5" y="-2.5" width="4.3" height="5" rx="1.5" fill="#e09ad8"/></g></svg>
<svg class="abs" style="left:2223px;top:767.75px" width="24" height="24" viewBox="0 0 24 24"><defs><radialGradient id="sc" cx="0.45" cy="0.4" r="0.7"><stop offset="0" stop-color="#fcfcfc"/><stop offset="1" stop-color="#dadada"/></radialGradient></defs><circle cx="12" cy="12" r="9.8" fill="url(#sc)" stroke="#c4c4c4" stroke-width="1.2"/><rect x="8" y="8" width="8" height="8" fill="#c22d48"/></svg>
<div class="abs cb" style="left:638px;top:808.25px"></div>
<div class="abs td" style="left:705px;top:808.25px">2024072...</div>
<div class="abs td lk" style="left:899px;top:808.25px">非洲猪瘟流行态势...</div>
<div class="abs td" style="left:1211px;top:808.25px">2.3</div>
<div class="abs td" style="left:1329px;top:808.25px">2.3</div>
<div class="abs td" style="left:1447px;top:808.25px">--</div>
<div class="abs td" style="left:1653px;top:808.25px">谢明捷</div>
<div class="abs td" style="left:1821px;top:808.25px;letter-spacing:0.6px">2024-07-29</div>
<div class="abs td" style="left:2028px;top:808.25px">启用</div>
<svg class="abs" style="left:2193px;top:806.25px" width="24" height="24" viewBox="0 0 24 24"><defs><linearGradient id="pg" x1="0" y1="0" x2="0" y2="1"><stop offset="0" stop-color="#ffe39a"/><stop offset="0.5" stop-color="#f7a722"/><stop offset="1" stop-color="#c9700f"/></linearGradient><linearGradient id="pf" x1="0" y1="0" x2="0" y2="1"><stop offset="0" stop-color="#e0e0e0"/><stop offset="1" stop-color="#7d7d7d"/></linearGradient></defs><g transform="translate(1.9 22.4) rotate(-43.6)"><path d="M0 0 L5.5 -2.5 V2.5Z" fill="#c9b79a"/><path d="M0 0 L2 -0.9 V0.9Z" fill="#5a4a3a"/><rect x="5.5" y="-2.5" width="15" height="5" fill="url(#pg)"/><rect x="20.5" y="-2.5" width="3" height="5" fill="url(#pf)"/><rect x="23.5" y="-2.5" width="4.3" height="5" rx="1.5" fill="#e09ad8"/></g></svg>
<svg class="abs" style="left:2223px;top:806.25px" width="24" height="24" viewBox="0 0 24 24"><defs><radialGradient id="sc" cx="0.45" cy="0.4" r="0.7"><stop offset="0" stop-color="#fcfcfc"/><stop offset="1" stop-color="#dadada"/></radialGradient></defs><circle cx="12" cy="12" r="9.8" fill="url(#sc)" stroke="#c4c4c4" stroke-width="1.2"/><rect x="8" y="8" width="8" height="8" fill="#c22d48"/></svg>
<div class="abs cb" style="left:638px;top:846.75px"></div>
<div class="abs td" style="left:705px;top:846.75px">2023060...</div>
<div class="abs td lk" style="left:899px;top:846.75px">关于调整和补充非...</div>
<div class="abs td" style="left:1211px;top:846.75px">1.7</div>
<div class="abs td" style="left:1329px;top:846.75px">1.7</div>
<div class="abs td" style="left:1447px;top:846.75px">--</div>
<div class="abs td" style="left:1653px;top:846.75px">谢明捷</div>
<div class="abs td" style="left:1821px;top:846.75px;letter-spacing:0.6px">2023-06-07</div>
<div class="abs td" style="left:2028px;top:846.75px">启用</div>
<svg class="abs" style="left:2193px;top:844.75px" width="24" height="24" viewBox="0 0 24 24"><defs><linearGradient id="pg" x1="0" y1="0" x2="0" y2="1"><stop offset="0" stop-color="#ffe39a"/><stop offset="0.5" stop-color="#f7a722"/><stop offset="1" stop-color="#c9700f"/></linearGradient><linearGradient id="pf" x1="0" y1="0" x2="0" y2="1"><stop offset="0" stop-color="#e0e0e0"/><stop offset="1" stop-color="#7d7d7d"/></linearGradient></defs><g transform="translate(1.9 22.4) rotate(-43.6)"><path d="M0 0 L5.5 -2.5 V2.5Z" fill="#c9b79a"/><path d="M0 0 L2 -0.9 V0.9Z" fill="#5a4a3a"/><rect x="5.5" y="-2.5" width="15" height="5" fill="url(#pg)"/><rect x="20.5" y="-2.5" width="3" height="5" fill="url(#pf)"/><rect x="23.5" y="-2.5" width="4.3" height="5" rx="1.5" fill="#e09ad8"/></g></svg>
<svg class="abs" style="left:2223px;top:844.75px" width="24" height="24" viewBox="0 0 24 24"><defs><radialGradient id="sc" cx="0.45" cy="0.4" r="0.7"><stop offset="0" stop-color="#fcfcfc"/><stop offset="1" stop-color="#dadada"/></radialGradient></defs><circle cx="12" cy="12" r="9.8" fill="url(#sc)" stroke="#c4c4c4" stroke-width="1.2"/><rect x="8" y="8" width="8" height="8" fill="#c22d48"/></svg>
<div class="abs cb" style="left:638px;top:885.25px"></div>
<div class="abs td" style="left:705px;top:885.25px">2024112...</div>
<div class="abs td lk" style="left:899px;top:885.25px">批次化管理</div>
<div class="abs td" style="left:1211px;top:885.25px">2.9</div>
<div class="abs td" style="left:1329px;top:885.25px">2.9</div>
<div class="abs td" style="left:1447px;top:885.25px">--</div>
<div class="abs td" style="left:1653px;top:885.25px">谢明捷</div>
<div class="abs td" style="left:1821px;top:885.25px;letter-spacing:0.6px">2024-11-23</div>
<div class="abs td" style="left:2028px;top:885.25px">启用</div>
<svg class="abs" style="left:2193px;top:883.25px" width="24" height="24" viewBox="0 0 24 24"><defs><linearGradient id="pg" x1="0" y1="0" x2="0" y2="1"><stop offset="0" stop-color="#ffe39a"/><stop offset="0.5" stop-color="#f7a722"/><stop offset="1" stop-color="#c9700f"/></linearGradient><linearGradient id="pf" x1="0" y1="0" x2="0" y2="1"><stop offset="0" stop-color="#e0e0e0"/><stop offset="1" stop-color="#7d7d7d"/></linearGradient></defs><g transform="translate(1.9 22.4) rotate(-43.6)"><path d="M0 0 L5.5 -2.5 V2.5Z" fill="#c9b79a"/><path d="M0 0 L2 -0.9 V0.9Z" fill="#5a4a3a"/><rect x="5.5" y="-2.5" width="15" height="5" fill="url(#pg)"/><rect x="20.5" y="-2.5" width="3" height="5" fill="url(#pf)"/><rect x="23.5" y="-2.5" width="4.3" height="5" rx="1.5" fill="#e09ad8"/></g></svg>
<svg class="abs" style="left:2223px;top:883.25px" width="24" height="24" viewBox="0 0 24 24"><defs><radialGradient id="sc" cx="0.45" cy="0.4" r="0.7"><stop offset="0" stop-color="#fcfcfc"/><stop offset="1" stop-color="#dadada"/></radialGradient></defs><circle cx="12" cy="12" r="9.8" fill="url(#sc)" stroke="#c4c4c4" stroke-width="1.2"/><rect x="8" y="8" width="8" height="8" fill="#c22d48"/></svg>
<div class="abs cb" style="left:638px;top:923.75px"></div>
<div class="abs td" style="left:705px;top:923.75px">PTC012401</div>
<div class="abs td lk" style="left:899px;top:923.75px">快速打动领导的工...</div>
<div class="abs td" style="left:1211px;top:923.75px">0.1</div>
<div class="abs td" style="left:1329px;top:923.75px">0.1</div>
<div class="abs td" style="left:1447px;top:923.75px">--</div>
<div class="abs td" style="left:1653px;top:923.75px">系统管...</div>
<div class="abs td" style="left:1821px;top:923.75px;letter-spacing:0.6px">2022-08-31</div>
<div class="abs td" style="left:2028px;top:923.75px">启用</div>
<svg class="abs" style="left:2193px;top:921.75px" width="24" height="24" viewBox="0 0 24 24"><defs><linearGradient id="pg" x1="0" y1="0" x2="0" y2="1"><stop offset="0" stop-color="#ffe39a"/><stop offset="0.5" stop-color="#f7a722"/><stop offset="1" stop-color="#c9700f"/></linearGradient><linearGradient id="pf" x1="0" y1="0" x2="0" y2="1"><stop offset="0" stop-color="#e0e0e0"/><stop offset="1" stop-color="#7d7d7d"/></linearGradient></defs><g transform="translate(1.9 22.4) rotate(-43.6)"><path d="M0 0 L5.5 -2.5 V2.5Z" fill="#c9b79a"/><path d="M0 0 L2 -0.9 V0.9Z" fill="#5a4a3a"/><rect x="5.5" y="-2.5" width="15" height="5" fill="url(#pg)"/><rect x="20.5" y="-2.5" width="3" height="5" fill="url(#pf)"/><rect x="23.5" y="-2.5" width="4.3" height="5" rx="1.5" fill="#e09ad8"/></g></svg>
<svg class="abs" style="left:2223px;top:921.75px" width="24" height="24" viewBox="0 0 24 24"><defs><radialGradient id="sc" cx="0.45" cy="0.4" r="0.7"><stop offset="0" stop-color="#fcfcfc"/><stop offset="1" stop-color="#dadada"/></radialGradient></defs><circle cx="12" cy="12" r="9.8" fill="url(#sc)" stroke="#c4c4c4" stroke-width="1.2"/><rect x="8" y="8" width="8" height="8" fill="#c22d48"/></svg>
<div class="abs" style="left:694px;top:610.5px;width:1711px;height:36.5px;border:3px solid #f5333a;border-radius:4px"></div>
<svg class="abs" style="left:2230px;top:495px" width="110" height="135" viewBox="2230 495 110 135"><path d="M2325.3 500.2 L2246.7 605.7 L2242 602 L2240.5 622 L2258.5 614 L2253.3 610.3 L2327.3 501.6 Z" fill="#f5333a"/></svg>
<div class="abs fl" style="left:609px;top:286px">课程来源:</div>
<div class="abs fin" style="left:684px;top:279px;width:114px"><span class="st">全部课程</span><span class="sa"><i></i></span></div>
<div class="abs fl" style="left:805px;top:286px">课程编号/名称:</div>
<div class="abs fin" style="left:916px;top:279px;width:89px"></div>
<div class="abs fl" style="left:1012px;top:286px">讲师:</div>
<div class="abs fin" style="left:1057px;top:279px;width:95px"></div>
<div class="abs fl" style="left:1159px;top:286px">创建人:</div>
<div class="abs fin" style="left:1219px;top:279px;width:95px"></div>
<div class="abs fl" style="left:1321px;top:286px">课程状态:</div>
<div class="abs fin" style="left:1396px;top:279px;width:89px"><span class="st">全部</span><span class="sa"><i></i></span></div>
<div class="abs fl" style="left:609px;top:345px">推荐状态:</div>
<div class="abs fin" style="left:684px;top:338px;width:89px"><span class="st">全部</span><span class="sa"><i></i></span></div>
<div class="abs fl" style="left:779px;top:345px">结业条件:</div>
<div class="abs fin" style="left:855px;top:338px;width:114px"><span class="st">全部</span><span class="sa"><i></i></span></div>
<div class="abs fl" style="left:975px;top:345px">显示顺序:</div>
<div class="abs fin" style="left:1050px;top:338px;width:165px"><span class="st">默认排列</span><span class="sa"><i></i></span></div>
<div class="abs fl" style="left:1221px;top:345px">标签:</div>
<div class="abs fin" style="left:1266px;top:338px;width:115px"></div>
<div class="abs" style="left:1387px;top:338px;width:62px;height:31px;border-radius:4px;background:linear-gradient(#64aef0 0%,#4d98e4 50%,#2f80d2 52%,#3a89da);border:1px solid #3a7fc9;color:#fff;font-size:15px;line-height:29px;text-align:center">筛选</div>
<div class="abs pg dis" style="left:1751px;width:63px">首页</div>
<div class="abs pg dis" style="left:1823px;width:76px">上一页</div>
<div class="abs pg" style="left:1908px;width:77px">下一页</div>
<div class="abs pg" style="left:1994px;width:62px">末页</div>
<div class="abs pt" style="left:2064px;top:980px">每页:</div>
<div class="abs" style="left:2104px;top:975px;width:63px;height:28px;border:1px solid #d8cfc0;background:#fff"><span class="abs pt" style="left:3px;top:4px">10</span><span class="abs" style="left:40px;top:4px;width:18px;height:18px;background:#ececec"><i class="abs" style="left:4px;top:7px;border-left:5px solid transparent;border-right:5px solid transparent;border-top:5px solid #aaa"></i></span></div>
<div class="abs pt" style="left:2173px;top:980px">转到</div>
<div class="abs" style="left:2210px;top:976px;width:49px;height:29px;border:1px solid #d8cfc0;background:#fff"></div>
<div class="abs" style="left:2265px;top:977px;width:38px;height:27px;border:1px solid #c3cad3;border-radius:4px;background:linear-gradient(#fff,#eef0f3);font-size:15px;line-height:25px;text-align:center;color:#333">Go</div>
<div class="abs pt" style="left:2310px;top:980px;letter-spacing:0.5px">第1/21页 共206条记录</div>
<div class="abs" style="left:486px;top:228px;width:15px;height:16px;border-radius:3px;background:#6a6a6a"><svg class="abs" style="left:1.5px;top:2px" width="12" height="12" viewBox="0 0 12 12"><path d="M1.5 6.5 L4.5 9.5 L10.5 2.5" stroke="#fff" stroke-width="2" fill="none"/></svg></div>
<div class="abs" style="left:326px;top:255px;width:242px;height:36px;border:1px solid #c8c8c8;border-top:2px solid #777;border-left:2px solid #888;border-radius:4px;background:#fff"></div>
<div class="abs" style="left:334px;top:262px;font-size:15px;line-height:20px;color:#c6c6c6;white-space:nowrap">输入关键字，按回车键筛选</div>
<div class="abs" style="left:538px;top:260px;width:24px;height:24px;border:1px solid #9dbfe0;border-radius:2px;background:linear-gradient(#f2f8fd,#d4e6f6)"><svg class="abs" style="left:4px;top:4px" width="16" height="16" viewBox="0 0 16 16"><circle cx="6.5" cy="6.5" r="4" stroke="#3c8ae0" stroke-width="2.2" fill="none"/><path d="M9.5 9.5 L13.5 13.5" stroke="#3c8ae0" stroke-width="2.6" stroke-linecap="round"/></svg></div>
<div class="abs" style="left:563px;top:304px;width:6px;height:246px;border-radius:3px;background:#d4d4d4"></div>
<div class="abs" style="left:323px;top:300px;width:238px;height:593px;overflow:hidden">
<svg class="abs" style="left:6px;top:16px" width="12" height="12" viewBox="0 0 12 12"><rect x="0.5" y="0.5" width="11" height="11" fill="#fff" stroke="#9a9a9a"/><path d="M3 5.5 H8" stroke="#888"/></svg>
<div class="abs" style="left:25px;top:13px"><svg width="22" height="17" viewBox="0 0 22 17"><defs><linearGradient id="fo" x1="0" y1="0" x2="0" y2="1"><stop offset="0" stop-color="#b9d8fb"/><stop offset="1" stop-color="#5a9cf0"/></linearGradient></defs><path d="M1 2 Q1 1 2 1 H7 L9 3 H17 Q18 3 18 4 V6 H4 Z" fill="#5c9ee8"/><path d="M0.5 16 L3.5 6 H21.5 L18.5 16Z" fill="url(#fo)"/><path d="M1 2 V16" stroke="#5c9ee8" stroke-width="1.5"/></svg></div>
<div class="abs tt" style="left:53px;top:10.5px">课程分类</div>
<svg class="abs" style="left:17px;top:46px" width="12" height="12" viewBox="0 0 12 12"><rect x="0.5" y="0.5" width="11" height="11" fill="#fff" stroke="#9a9a9a"/><path d="M3 5.5 H8" stroke="#888"/></svg>
<div class="abs" style="left:36px;top:43px"><svg width="22" height="17" viewBox="0 0 22 17"><defs><linearGradient id="fo" x1="0" y1="0" x2="0" y2="1"><stop offset="0" stop-color="#b9d8fb"/><stop offset="1" stop-color="#5a9cf0"/></linearGradient></defs><path d="M1 2 Q1 1 2 1 H7 L9 3 H17 Q18 3 18 4 V6 H4 Z" fill="#5c9ee8"/><path d="M0.5 16 L3.5 6 H21.5 L18.5 16Z" fill="url(#fo)"/><path d="M1 2 V16" stroke="#5c9ee8" stroke-width="1.5"/></svg></div>
<div class="abs tt" style="left:64px;top:40.5px">宣传片</div>
<div class="abs" style="left:49px;top:71px"><svg width="16" height="21" viewBox="0 0 16 20" preserveAspectRatio="none"><path d="M1.5 1.5 H10.5 L14.5 5.5 V18.5 H1.5Z" fill="#fafafa" stroke="#9a9a9a"/><path d="M10.5 1.5 V5.5 H14.5" fill="#e5e5e5" stroke="#9a9a9a"/><path d="M4 7.5 H12 M4 10 H12 M4 12.5 H12 M4 15 H12" stroke="#c9c9c9"/><path d="M3.5 7.5 H4.8 M3.5 10 H4.8 M3.5 12.5 H4.8 M3.5 15 H4.8" stroke="#4caf50"/></svg></div>
<div class="abs tt" style="left:75px;top:70.5px">产品宣传片</div>
<div class="abs" style="left:49px;top:101px"><svg width="16" height="21" viewBox="0 0 16 20" preserveAspectRatio="none"><path d="M1.5 1.5 H10.5 L14.5 5.5 V18.5 H1.5Z" fill="#fafafa" stroke="#9a9a9a"/><path d="M10.5 1.5 V5.5 H14.5" fill="#e5e5e5" stroke="#9a9a9a"/><path d="M4 7.5 H12 M4 10 H12 M4 12.5 H12 M4 15 H12" stroke="#c9c9c9"/><path d="M3.5 7.5 H4.8 M3.5 10 H4.8 M3.5 12.5 H4.8 M3.5 15 H4.8" stroke="#4caf50"/></svg></div>
<div class="abs tt" style="left:75px;top:100.5px">企业宣传片</div>
<div class="abs" style="left:37px;top:131px"><svg width="16" height="21" viewBox="0 0 16 20" preserveAspectRatio="none"><path d="M1.5 1.5 H10.5 L14.5 5.5 V18.5 H1.5Z" fill="#fafafa" stroke="#9a9a9a"/><path d="M10.5 1.5 V5.5 H14.5" fill="#e5e5e5" stroke="#9a9a9a"/><path d="M4 7.5 H12 M4 10 H12 M4 12.5 H12 M4 15 H12" stroke="#c9c9c9"/><path d="M3.5 7.5 H4.8 M3.5 10 H4.8 M3.5 12.5 H4.8 M3.5 15 H4.8" stroke="#4caf50"/></svg></div>
<div class="abs tt" style="left:63px;top:130.5px">规范制度</div>
<div class="abs" style="left:37px;top:161px"><svg width="16" height="21" viewBox="0 0 16 20" preserveAspectRatio="none"><path d="M1.5 1.5 H10.5 L14.5 5.5 V18.5 H1.5Z" fill="#fafafa" stroke="#9a9a9a"/><path d="M10.5 1.5 V5.5 H14.5" fill="#e5e5e5" stroke="#9a9a9a"/><path d="M4 7.5 H12 M4 10 H12 M4 12.5 H12 M4 15 H12" stroke="#c9c9c9"/><path d="M3.5 7.5 H4.8 M3.5 10 H4.8 M3.5 12.5 H4.8 M3.5 15 H4.8" stroke="#4caf50"/></svg></div>
<div class="abs tt" style="left:63px;top:160.5px">营销管理</div>
<svg class="abs" style="left:17px;top:196px" width="12" height="12" viewBox="0 0 12 12"><rect x="0.5" y="0.5" width="11" height="11" fill="#fff" stroke="#9a9a9a"/><path d="M3 5.5 H8" stroke="#888"/></svg>
<div class="abs" style="left:36px;top:193px"><svg width="22" height="17" viewBox="0 0 22 17"><defs><linearGradient id="fo" x1="0" y1="0" x2="0" y2="1"><stop offset="0" stop-color="#b9d8fb"/><stop offset="1" stop-color="#5a9cf0"/></linearGradient></defs><path d="M1 2 Q1 1 2 1 H7 L9 3 H17 Q18 3 18 4 V6 H4 Z" fill="#5c9ee8"/><path d="M0.5 16 L3.5 6 H21.5 L18.5 16Z" fill="url(#fo)"/><path d="M1 2 V16" stroke="#5c9ee8" stroke-width="1.5"/></svg></div>
<div class="abs tt" style="left:64px;top:190.5px">职业化</div>
<svg class="abs" style="left:28px;top:226px" width="12" height="12" viewBox="0 0 12 12"><rect x="0.5" y="0.5" width="11" height="11" fill="#fff" stroke="#9a9a9a"/><path d="M3 5.5 H8" stroke="#888"/><path d="M5.5 3 V8" stroke="#888"/></svg>
<div class="abs" style="left:47px;top:223px"><svg width="22" height="17" viewBox="0 0 22 17"><defs><linearGradient id="fc" x1="0" y1="0" x2="0" y2="1"><stop offset="0" stop-color="#b3d4f8"/><stop offset="1" stop-color="#4a93ea"/></linearGradient></defs><path d="M1 2 Q1 1 2 1 H7 L9 3 H20 Q21 3 21 4 V6 H1Z" fill="#5c9ee8"/><rect x="1" y="5" width="20" height="11" rx="1" fill="url(#fc)"/></svg></div>
<div class="abs tt" style="left:75px;top:220.5px">职业素养</div>
<svg class="abs" style="left:17px;top:256px" width="12" height="12" viewBox="0 0 12 12"><rect x="0.5" y="0.5" width="11" height="11" fill="#fff" stroke="#9a9a9a"/><path d="M3 5.5 H8" stroke="#888"/></svg>
<div class="abs" style="left:36px;top:253px"><svg width="22" height="17" viewBox="0 0 22 17"><defs><linearGradient id="fo" x1="0" y1="0" x2="0" y2="1"><stop offset="0" stop-color="#b9d8fb"/><stop offset="1" stop-color="#5a9cf0"/></linearGradient></defs><path d="M1 2 Q1 1 2 1 H7 L9 3 H17 Q18 3 18 4 V6 H4 Z" fill="#5c9ee8"/><path d="M0.5 16 L3.5 6 H21.5 L18.5 16Z" fill="url(#fo)"/><path d="M1 2 V16" stroke="#5c9ee8" stroke-width="1.5"/></svg></div>
<div class="abs tt" style="left:64px;top:250.5px">生产管理</div>
<div class="abs" style="left:49px;top:281px"><svg width="16" height="21" viewBox="0 0 16 20" preserveAspectRatio="none"><path d="M1.5 1.5 H10.5 L14.5 5.5 V18.5 H1.5Z" fill="#fafafa" stroke="#9a9a9a"/><path d="M10.5 1.5 V5.5 H14.5" fill="#e5e5e5" stroke="#9a9a9a"/><path d="M4 7.5 H12 M4 10 H12 M4 12.5 H12 M4 15 H12" stroke="#c9c9c9"/><path d="M3.5 7.5 H4.8 M3.5 10 H4.8 M3.5 12.5 H4.8 M3.5 15 H4.8" stroke="#4caf50"/></svg></div>
<div class="abs tt" style="left:75px;top:280.5px">养殖技术</div>
<div class="abs" style="left:49px;top:311px"><svg width="16" height="21" viewBox="0 0 16 20" preserveAspectRatio="none"><path d="M1.5 1.5 H10.5 L14.5 5.5 V18.5 H1.5Z" fill="#fafafa" stroke="#9a9a9a"/><path d="M10.5 1.5 V5.5 H14.5" fill="#e5e5e5" stroke="#9a9a9a"/><path d="M4 7.5 H12 M4 10 H12 M4 12.5 H12 M4 15 H12" stroke="#c9c9c9"/><path d="M3.5 7.5 H4.8 M3.5 10 H4.8 M3.5 12.5 H4.8 M3.5 15 H4.8" stroke="#4caf50"/></svg></div>
<div class="abs tt" style="left:75px;top:310.5px">环境管理</div>
<div class="abs" style="left:49px;top:341px"><svg width="16" height="21" viewBox="0 0 16 20" preserveAspectRatio="none"><path d="M1.5 1.5 H10.5 L14.5 5.5 V18.5 H1.5Z" fill="#fafafa" stroke="#9a9a9a"/><path d="M10.5 1.5 V5.5 H14.5" fill="#e5e5e5" stroke="#9a9a9a"/><path d="M4 7.5 H12 M4 10 H12 M4 12.5 H12 M4 15 H12" stroke="#c9c9c9"/><path d="M3.5 7.5 H4.8 M3.5 10 H4.8 M3.5 12.5 H4.8 M3.5 15 H4.8" stroke="#4caf50"/></svg></div>
<div class="abs tt" style="left:75px;top:340.5px">设备管理</div>
<div class="abs" style="left:49px;top:371px"><svg width="16" height="21" viewBox="0 0 16 20" preserveAspectRatio="none"><path d="M1.5 1.5 H10.5 L14.5 5.5 V18.5 H1.5Z" fill="#fafafa" stroke="#9a9a9a"/><path d="M10.5 1.5 V5.5 H14.5" fill="#e5e5e5" stroke="#9a9a9a"/><path d="M4 7.5 H12 M4 10 H12 M4 12.5 H12 M4 15 H12" stroke="#c9c9c9"/><path d="M3.5 7.5 H4.8 M3.5 10 H4.8 M3.5 12.5 H4.8 M3.5 15 H4.8" stroke="#4caf50"/></svg></div>
<div class="abs tt" style="left:75px;top:370.5px">其他技能</div>
<svg class="abs" style="left:17px;top:406px" width="12" height="12" viewBox="0 0 12 12"><rect x="0.5" y="0.5" width="11" height="11" fill="#fff" stroke="#9a9a9a"/><path d="M3 5.5 H8" stroke="#888"/></svg>
<div class="abs" style="left:36px;top:403px"><svg width="22" height="17" viewBox="0 0 22 17"><defs><linearGradient id="fo" x1="0" y1="0" x2="0" y2="1"><stop offset="0" stop-color="#b9d8fb"/><stop offset="1" stop-color="#5a9cf0"/></linearGradient></defs><path d="M1 2 Q1 1 2 1 H7 L9 3 H17 Q18 3 18 4 V6 H4 Z" fill="#5c9ee8"/><path d="M0.5 16 L3.5 6 H21.5 L18.5 16Z" fill="url(#fo)"/><path d="M1 2 V16" stroke="#5c9ee8" stroke-width="1.5"/></svg></div>
<div class="abs tt" style="left:64px;top:400.5px">人力资源</div>
<div class="abs" style="left:49px;top:431px"><svg width="16" height="21" viewBox="0 0 16 20" preserveAspectRatio="none"><path d="M1.5 1.5 H10.5 L14.5 5.5 V18.5 H1.5Z" fill="#fafafa" stroke="#9a9a9a"/><path d="M10.5 1.5 V5.5 H14.5" fill="#e5e5e5" stroke="#9a9a9a"/><path d="M4 7.5 H12 M4 10 H12 M4 12.5 H12 M4 15 H12" stroke="#c9c9c9"/><path d="M3.5 7.5 H4.8 M3.5 10 H4.8 M3.5 12.5 H4.8 M3.5 15 H4.8" stroke="#4caf50"/></svg></div>
<div class="abs tt" style="left:75px;top:430.5px">招聘</div>
<div class="abs" style="left:49px;top:461px"><svg width="16" height="21" viewBox="0 0 16 20" preserveAspectRatio="none"><path d="M1.5 1.5 H10.5 L14.5 5.5 V18.5 H1.5Z" fill="#fafafa" stroke="#9a9a9a"/><path d="M10.5 1.5 V5.5 H14.5" fill="#e5e5e5" stroke="#9a9a9a"/><path d="M4 7.5 H12 M4 10 H12 M4 12.5 H12 M4 15 H12" stroke="#c9c9c9"/><path d="M3.5 7.5 H4.8 M3.5 10 H4.8 M3.5 12.5 H4.8 M3.5 15 H4.8" stroke="#4caf50"/></svg></div>
<div class="abs tt" style="left:75px;top:460.5px">绩效</div>
<div class="abs" style="left:49px;top:491px"><svg width="16" height="21" viewBox="0 0 16 20" preserveAspectRatio="none"><path d="M1.5 1.5 H10.5 L14.5 5.5 V18.5 H1.5Z" fill="#fafafa" stroke="#9a9a9a"/><path d="M10.5 1.5 V5.5 H14.5" fill="#e5e5e5" stroke="#9a9a9a"/><path d="M4 7.5 H12 M4 10 H12 M4 12.5 H12 M4 15 H12" stroke="#c9c9c9"/><path d="M3.5 7.5 H4.8 M3.5 10 H4.8 M3.5 12.5 H4.8 M3.5 15 H4.8" stroke="#4caf50"/></svg></div>
<div class="abs tt" style="left:75px;top:490.5px">薪酬</div>
<svg class="abs" style="left:17px;top:526px" width="12" height="12" viewBox="0 0 12 12"><rect x="0.5" y="0.5" width="11" height="11" fill="#fff" stroke="#9a9a9a"/><path d="M3 5.5 H8" stroke="#888"/></svg>
<div class="abs" style="left:36px;top:523px"><svg width="22" height="17" viewBox="0 0 22 17"><defs><linearGradient id="fo" x1="0" y1="0" x2="0" y2="1"><stop offset="0" stop-color="#b9d8fb"/><stop offset="1" stop-color="#5a9cf0"/></linearGradient></defs><path d="M1 2 Q1 1 2 1 H7 L9 3 H17 Q18 3 18 4 V6 H4 Z" fill="#5c9ee8"/><path d="M0.5 16 L3.5 6 H21.5 L18.5 16Z" fill="url(#fo)"/><path d="M1 2 V16" stroke="#5c9ee8" stroke-width="1.5"/></svg></div>
<div class="abs tt" style="left:64px;top:520.5px">财务管理</div>
<div class="abs" style="left:49px;top:551px"><svg width="16" height="21" viewBox="0 0 16 20" preserveAspectRatio="none"><path d="M1.5 1.5 H10.5 L14.5 5.5 V18.5 H1.5Z" fill="#fafafa" stroke="#9a9a9a"/><path d="M10.5 1.5 V5.5 H14.5" fill="#e5e5e5" stroke="#9a9a9a"/><path d="M4 7.5 H12 M4 10 H12 M4 12.5 H12 M4 15 H12" stroke="#c9c9c9"/><path d="M3.5 7.5 H4.8 M3.5 10 H4.8 M3.5 12.5 H4.8 M3.5 15 H4.8" stroke="#4caf50"/></svg></div>
<div class="abs tt" style="left:75px;top:550.5px">总账管理</div>
<div class="abs" style="left:49px;top:581px"><svg width="16" height="21" viewBox="0 0 16 20" preserveAspectRatio="none"><path d="M1.5 1.5 H10.5 L14.5 5.5 V18.5 H1.5Z" fill="#fafafa" stroke="#9a9a9a"/><path d="M10.5 1.5 V5.5 H14.5" fill="#e5e5e5" stroke="#9a9a9a"/><path d="M4 7.5 H12 M4 10 H12 M4 12.5 H12 M4 15 H12" stroke="#c9c9c9"/><path d="M3.5 7.5 H4.8 M3.5 10 H4.8 M3.5 12.5 H4.8 M3.5 15 H4.8" stroke="#4caf50"/></svg></div>
<div class="abs tt" style="left:75px;top:580.5px">成本管理</div>
</div>
<svg class="abs" style="left:1950px;top:22px" width="26" height="26" viewBox="0 0 26 26"><circle cx="11.8" cy="11.6" r="8" stroke="#444" stroke-width="1.7" fill="none"/><path d="M17.6 17.6 L22.5 22" stroke="#444" stroke-width="1.9" stroke-linecap="round"/></svg>
<svg class="abs" style="left:2366.5px;top:19.3px" width="31" height="31" viewBox="0 0 31 31"><defs><clipPath id="avc"><circle cx="15.5" cy="15.5" r="15"/></clipPath></defs><circle cx="15.5" cy="15.5" r="15" fill="#e03a4a"/><g clip-path="url(#avc)"><ellipse cx="12.2" cy="14.5" rx="5.8" ry="6" fill="#f2d3b6"/><path d="M6 15 Q6 9 11 8.5 Q17 8 19 12 L17.5 13.5 Q14 10.5 10 12 Q8 13 7.8 17Z" fill="#1a1a1a"/><path d="M2.5 12.5 Q5 7 10.5 6.5 Q12.5 2.2 17.5 2.5 Q22.5 3.5 22.5 9 Q27 12.5 24.5 18.5 Q20 12.5 13 11 Q7 10.5 3.5 14Z" fill="#d9a83a"/><path d="M11.5 8.5 Q17 7.5 22 10" stroke="#9b3a20" stroke-width="1.2" fill="none"/><circle cx="14" cy="15" r="1.3" fill="#fff"/><path d="M11 20 Q13 21.5 15 20.5" stroke="#fff" stroke-width="1.2" fill="none"/><path d="M13 22 L21 33 L9 33Z" fill="#c8202a"/><circle cx="17" cy="30" r="1.2" fill="#dfe" opacity="0.8"/></g></svg>
<svg class="abs" width="0" height="0"><defs><linearGradient id="twg" x1="0" y1="0" x2="0" y2="1"><stop offset="0" stop-color="#e0e0e0"/><stop offset="1" stop-color="#fff"/></linearGradient></defs></svg>
<svg class="abs" style="left:1824px;top:95px" width="22" height="21" viewBox="0 0 22 21"><rect x="1.5" y="2.5" width="17" height="14" rx="1" fill="url(#twg)" stroke="#2a87c8" stroke-width="1.6"/><rect x="3" y="4" width="14" height="2.5" fill="#3a9ae0"/><path d="M8.5 12 Q8.5 7.5 14 7.5 Q20.5 7.5 20.5 12 Q20.5 16 14.5 16 L11 19 L11.5 15.5 Q8.5 14.5 8.5 12Z" fill="#fdf3e0" stroke="#e0962e" stroke-width="1.5"/></svg>
<svg class="abs" style="left:1965px;top:95px" width="22" height="21" viewBox="0 0 22 21"><path d="M5 2 H16 Q18 2 18 4 V5 H16 V17 Q16 19 14 19 H4 Q2 19 2 17 V16 H4 V4 Q4 2 5 2Z" fill="#f4f8fc" stroke="#3a86c8" stroke-width="1.4"/><path d="M6.5 6 H13 M6.5 8.5 H12 M6.5 11 H11" stroke="#9ab"/><path d="M9 17 L10 13.5 L18 5.5 L20 7.5 L12 15.5Z" fill="#3d7fd0" stroke="#2a5fa0" stroke-width="0.7"/><path d="M18 5.5 L20 7.5 L21 6.5 L19 4.5Z" fill="#e23"/><path d="M9 17 L10 13.5 L12 15.5Z" fill="#f1c27d"/></svg>
<svg class="abs" style="left:2094px;top:95px" width="22" height="21" viewBox="0 0 22 21"><rect x="1.5" y="2.5" width="17" height="14" rx="1" fill="url(#twg)" stroke="#2a87c8" stroke-width="1.6"/><rect x="3" y="4" width="14" height="2.5" fill="#3a9ae0"/><circle cx="16.5" cy="13" r="3.3" fill="#f5c04a" stroke="#c98a1a" stroke-width="1"/><path d="M14.5 15 L10.5 19 L9 17.8 L10 16.8 L9.3 16 L12.8 12.8" fill="#f5c04a" stroke="#c98a1a" stroke-width="1"/></svg>
<svg class="abs" style="left:2221px;top:95px" width="22" height="21" viewBox="0 0 22 21"><rect x="6.5" y="1.5" width="13" height="11" rx="1" fill="#79b35a" stroke="#888" stroke-width="1.3"/><rect x="1.5" y="6.5" width="14" height="12" rx="1" fill="#6db2ec" stroke="#777" stroke-width="1.4"/><rect x="3" y="15" width="11" height="1.5" fill="#2c7fc6"/></svg>
<svg class="abs" style="left:2377px;top:95px" width="22" height="21" viewBox="0 0 22 21"><rect x="1.5" y="2.5" width="17" height="14" rx="1" fill="url(#twg)" stroke="#2a87c8" stroke-width="1.6"/><rect x="3" y="4" width="14" height="2.5" fill="#3a9ae0"/><circle cx="15" cy="14" r="4.5" fill="#eee" stroke="#9a9a9a" stroke-width="2.4" stroke-dasharray="2.2 1.3"/><circle cx="15" cy="14" r="2" fill="#fff" stroke="#999" stroke-width="1"/></svg>
<svg class="abs" style="left:2392px;top:170px" width="22" height="22" viewBox="0 0 22 22"><circle cx="11" cy="11" r="10" fill="#fff" stroke="#2f73bf" stroke-width="1"/><path d="M7.5 8.3 Q7.5 4.8 11 4.8 Q14.5 4.8 14.5 8 Q14.5 10 12.2 11 Q11 11.6 11 13.5" stroke="#3c86d3" stroke-width="2" fill="none" stroke-linecap="round"/><circle cx="11" cy="16.3" r="1.3" fill="#3c86d3"/></svg>
<svg class="abs" style="left:2504px;top:17px" width="26" height="26" viewBox="0 0 26 26"><circle cx="10" cy="10" r="6.5" stroke="#666" stroke-width="2.6" fill="none"/><path d="M15 15 L21 21" stroke="#8a5bd6" stroke-width="3.6" stroke-linecap="round"/></svg>
<svg class="abs" style="left:2505px;top:68px" width="24" height="24" viewBox="0 0 24 24"><defs><linearGradient id="tag" x1="0" y1="0" x2="0" y2="1"><stop offset="0" stop-color="#6aa2f0"/><stop offset="1" stop-color="#3f6fd8"/></linearGradient></defs><path d="M2.5 13 L12 3.5 Q13 2.5 14.5 2.6 L19.5 3 Q21 3.2 21.1 4.6 L21.5 9.5 Q21.6 11 20.5 12 L11 21.5 Q10 22.5 9 21.5 L2.5 15 Q1.5 14 2.5 13Z" fill="url(#tag)"/><circle cx="16" cy="8" r="2.2" fill="#fff" stroke="#2a3f9a" stroke-width="1"/></svg>
<div class="abs" style="left:2499px;top:121px;width:35px;height:1px;background:#ccc"></div>
<svg class="abs" style="left:2508px;top:151px" width="18" height="18" viewBox="0 0 18 18"><path d="M9 1.5 V16.5 M1.5 9 H16.5" stroke="#222" stroke-width="1.4"/></svg>
<div class="abs" style="left:2499px;top:196px;width:44px;height:59px;border-radius:4px 0 0 4px;background:linear-gradient(#fff,#e4f3fc);box-shadow:0 1px 3px rgba(0,0,0,0.25)"><svg class="abs" style="left:8px;top:8px" width="36" height="44" viewBox="0 0 36 44"><path d="M0.1 12.4 L11.5 1 H37.3 L25.9 12.4Z" fill="#a8d67a"/><path d="M0.1 12.4 H25.9 L33.5 20 H7.8Z" fill="#bde88c"/><path d="M9.9 21.9 H40 V29.9 H17Z" fill="#84dcfc"/><path d="M17 29.9 H43.3 L32 41.2 H6.2Z" fill="#00b4fc"/></svg></div>
<div class="abs" style="left:2477px;top:906px;width:45px;height:46px;border-radius:50%;background:#fafafa;box-shadow:0 1px 5px rgba(0,0,0,0.22)"><svg class="abs" style="left:4px;top:4px" width="37" height="37" viewBox="0 0 37 37"><circle cx="18.2" cy="18.2" r="18.8" fill="#dadada"/><path d="M7.5 25.5 Q6.5 12 11 6 Q15 1.8 21 2.3 Q28 3.2 29.2 12 Q29.8 20 28.5 26 L24 26 L24 15 L12 15 L12 26Z" fill="#4d3b34"/><ellipse cx="19.6" cy="17.3" rx="7.3" ry="8.2" fill="#f6dcd4"/><path d="M12 12.5 Q17 6 26.5 9.5 L26.8 7 Q20 3 13 7Z" fill="#4d3b34"/><ellipse cx="16" cy="17.6" rx="1.4" ry="1.5" fill="#2a1a1a"/><ellipse cx="23.2" cy="17.6" rx="1.4" ry="1.5" fill="#2a1a1a"/><path d="M18.6 22.5 Q19.6 23.3 20.6 22.5" stroke="#d8766e" stroke-width="1.1" fill="none"/><rect x="17.5" y="25" width="4.5" height="4" fill="#f3d2c8"/><path d="M7.8 36.5 Q8.5 31 14 29.6 Q18.5 31.5 23.5 29.6 Q28.5 31 29.1 36.5Z" fill="#1c1c1c"/></svg></div>
<div class="abs" style="left:2414.5px;top:1140.5px;width:43px;height:43px;border-radius:50%;border:1px solid #ececec;background:radial-gradient(circle at 62% 30%,#e4fbff 0,#f8feff 38%,#e3ebff 100%);box-shadow:0 0 14px rgba(0,0,0,0.07)"></div>
<svg class="abs" style="left:2415px;top:1141px" width="42" height="32" viewBox="0 0 42 32"><ellipse cx="22.5" cy="24.5" rx="10.5" ry="6.3" transform="rotate(-22 22.5 24.5)" stroke="#2f5df5" stroke-width="2.2" fill="none"/><ellipse cx="19.8" cy="20.3" rx="11.5" ry="7.6" transform="rotate(-33 19.8 20.3)" stroke="#1141ee" stroke-width="2.9" fill="none"/></svg>
</body></html>
